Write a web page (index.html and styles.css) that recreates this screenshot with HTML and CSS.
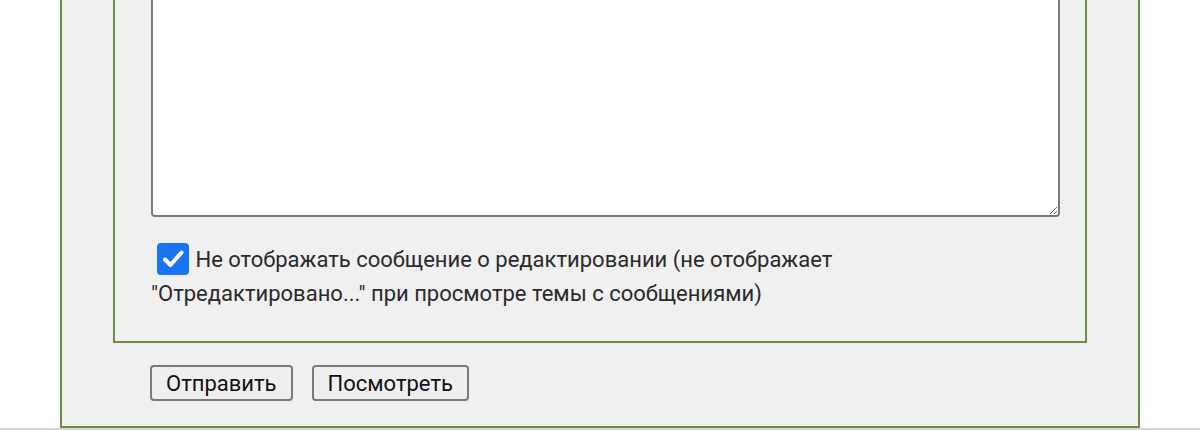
FILE: index.html
```html
<!DOCTYPE html>
<html lang="ru">
<head>
<meta charset="utf-8">
<title>Редактирование сообщения</title>
<link rel="stylesheet" href="styles.css">
</head>
<body>
<form class="post-form">
  <div class="fields">
    <textarea class="message" name="message"></textarea>
    <label class="option">
      <span class="check" aria-hidden="true">
        <svg viewBox="0 0 32 32" width="32" height="32">
          <rect x="0" y="0" width="32" height="32" rx="4" ry="4" fill="#1a73f0"/>
          <path d="M8 16.5 L13.5 22 L24.5 9.5" fill="none" stroke="#ffffff" stroke-width="4" stroke-linecap="round" stroke-linejoin="round"/>
        </svg>
      </span>
      Не отображать сообщение о редактировании (не отображает "Отредактировано..." при просмотре темы с сообщениями)
    </label>
  </div>
  <div class="actions">
    <button type="button" class="btn">Отправить</button>
    <button type="button" class="btn">Посмотреть</button>
  </div>
</form>
<div class="rule"></div>
</body>
</html>
```

FILE: styles.css
```css
html, body {
  margin: 0;
  padding: 0;
  background: #ffffff;
}

body {
  font-family: Roboto, "Noto Sans", "Liberation Sans", sans-serif;
  color: #222222;
  overflow: hidden;
  height: 430px;
}

.post-form {
  box-sizing: border-box;
  width: 1080px;
  margin: -160px 0 0 60px;
  border: 2px solid #6e8c48;
  background: #f0f0f0;
  padding: 20px 51px 25px;
}

.fields {
  border: 2px solid #6e8c48;
  padding: 20px 25px 30px 36px;
}

.message {
  display: block;
  box-sizing: border-box;
  width: 909px;
  height: 333px;
  margin: 0;
  border: 2px solid #7a7a7a;
  border-radius: 4px;
  background: #ffffff;
}

.option {
  display: block;
  max-width: 880px;
  margin-top: 26px;
  font-size: 22px;
  line-height: 34px;
  color: #2a2a2a;
}

.check {
  display: inline-block;
  width: 32px;
  height: 32px;
  margin: 0 1px 0 6px;
  vertical-align: -8px;
}

.check svg {
  display: block;
}

.actions {
  display: flex;
  gap: 19px;
  margin: 22px 0 0 37px;
}

.btn {
  box-sizing: border-box;
  height: 36px;
  padding: 0 14px;
  font-family: Roboto, "Noto Sans", "Liberation Sans", sans-serif;
  font-size: 22px;
  color: #111111;
  background: #efefef;
  border: 2px solid #7a7a7a;
  border-radius: 4px;
}

.rule {
  height: 0;
  border-top: 2px solid #d4d4d4;
}
```
